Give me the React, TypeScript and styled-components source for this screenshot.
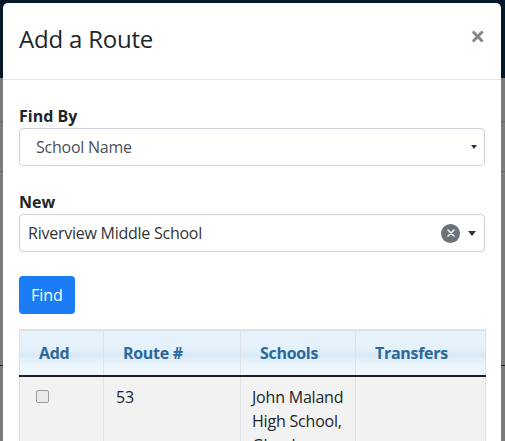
import React from 'react';
import styled, { createGlobalStyle } from 'styled-components';

const GlobalStyle = createGlobalStyle`
    * {
        box-sizing: border-box;
    }

    body {
        margin: 0;
        font-family: "Open Sans", "Noto Sans", sans-serif;
        color: #212529;
    }
`

const Page = styled.div`
    position: relative;
    width: 505px;
    height: 441px;
    overflow: hidden;
    background: #7b7b7b;
`

const NavBar = styled.div`
    height: 78px;
    background: #03192a;
`

const BackdropLine = styled.div <{ top: number; color: string }>`
    height: 1px;
    margin-top: ${props => props.top}px;
    background: ${props => props.color};
`

const Modal = styled.div`
    position: absolute;
    top: 3px;
    left: 3px;
    width: 498px;
    height: 460px;
    background: #fff;
    border-radius: 5px 5px 0 0;
`

const ModalHeader = styled.div`
    display: flex;
    align-items: center;
    justify-content: space-between;
    height: 77px;
    padding: 0 16px 5px 16px;
    border-bottom: 1px solid #e5e5e5;

    h4 {
        margin: 0;
        font-size: 24px;
        font-weight: 400;
        letter-spacing: -0.2px;
        color: #212529;
    }
`

const CloseButton = styled.button`
    border: none;
    background: none;
    padding: 0;
    margin-top: -6px;
    font-family: "Open Sans", sans-serif;
    font-size: 26px;
    font-weight: 700;
    line-height: 1;
    color: #858585;
`

const ModalBody = styled.div`
    padding: 24px 16px 0 16px;
`

const Field = styled.div`
    display: flex;
    flex-direction: column;
    margin-bottom: 24px;

    label {
        font-size: 16px;
        line-height: 24px;
        font-weight: 700;
        color: #212529;
    }
`

const SelectBox = styled.div <{ padLeft: number; padRight: number; textColor: string }>`
    display: flex;
    align-items: center;
    height: 38px;
    padding: 0 ${props => props.padRight}px 0 ${props => props.padLeft}px;
    border: 1px solid #cdd3d9;
    border-radius: 4px;
    font-size: 16px;
    letter-spacing: -0.25px;
    color: ${props => props.textColor};

    span {
        flex: 1;
    }
`

const Caret = styled.i <{ size: number }>`
    width: 0;
    height: 0;
    border-left: ${props => props.size}px solid transparent;
    border-right: ${props => props.size}px solid transparent;
    border-top: ${props => props.size + 1}px solid #333;
`

const ClearButton = styled.div`
    display: flex;
    align-items: center;
    justify-content: center;
    width: 19px;
    height: 19px;
    margin-right: 8px;
    border-radius: 50%;
    background: #6c7279;
`

const FindButton = styled.button`
    height: 38px;
    padding: 0 12px;
    margin-bottom: 15px;
    border: none;
    border-radius: 4px;
    background: #1b7cf4;
    color: #fff;
    font-family: "Open Sans", sans-serif;
    font-size: 16px;
`

const Table = styled.table`
    width: 466px;
    border-collapse: collapse;
    table-layout: fixed;
    border-top: 2px solid #dde2e6;
    font-size: 16px;
`

const HeadCell = styled.th <{ width: number }>`
    width: ${props => props.width}px;
    height: 46px;
    padding: 0 0 0 19px;
    text-align: left;
    font-weight: 700;
    letter-spacing: -0.3px;
    color: #2c6899;
    border: 1px solid #dde2e6;
    border-bottom: 2px solid #1e1e1e;
    background: linear-gradient(to bottom, #e7f3fb 0%, #e4f1fa 42%, #d7e9f6 55%, #e9f4fc 75%, #eef7fd 100%);
`

const BodyCell = styled.td <{ padLeft: number }>`
    vertical-align: top;
    height: 80px;
    padding: 8px 8px 0 ${props => props.padLeft}px;
    line-height: 24px;
    letter-spacing: -0.2px;
    color: #212529;
    background: #f2f2f2;
    border: 1px solid #dde2e6;
    border-top: none;
`

const CheckBox = styled.span`
    display: block;
    width: 13px;
    height: 13px;
    margin-top: 5px;
    border: 1px solid #9a9a9a;
    border-radius: 2px;
    background: #e9e9e9;
`

const columns = [
    { title: 'Add', width: 84 },
    { title: 'Route #', width: 137 },
    { title: 'Schools', width: 115 },
    { title: 'Transfers', width: 130 },
]

export default function App() {
    return (
        <>
            <GlobalStyle />
            <Page>
                <NavBar />
                <BackdropLine top={43} color="#56708a" />
                <BackdropLine top={49} color="#56708a" />
                <BackdropLine top={193} color="#1e1e1e" />
                <Modal>
                    <ModalHeader>
                        <h4>Add a Route</h4>
                        <CloseButton>×</CloseButton>
                    </ModalHeader>
                    <ModalBody>
                        <Field>
                            <label>Find By</label>
                            <SelectBox padLeft={16} padRight={7} textColor="#495057">
                                <span>School Name</span>
                                <Caret size={3} />
                            </SelectBox>
                        </Field>
                        <Field>
                            <label>New</label>
                            <SelectBox padLeft={8} padRight={8} textColor="#333">
                                <span>Riverview Middle School</span>
                                <ClearButton>
                                    <svg width="8" height="8" viewBox="0 0 8 8">
                                        <path d="M1 1 L7 7 M7 1 L1 7" stroke="#fff" strokeWidth="1.5" strokeLinecap="round" />
                                    </svg>
                                </ClearButton>
                                <Caret size={4} />
                            </SelectBox>
                        </Field>
                        <FindButton>Find</FindButton>
                        <Table>
                            <thead>
                                <tr>
                                    {columns.map(col => (
                                        <HeadCell key={col.title} width={col.width}>{col.title}</HeadCell>
                                    ))}
                                </tr>
                            </thead>
                            <tbody>
                                <tr>
                                    <BodyCell padLeft={16}><CheckBox /></BodyCell>
                                    <BodyCell padLeft={12}>53</BodyCell>
                                    <BodyCell padLeft={11}>John Maland High School, Glendon Middle School</BodyCell>
                                    <BodyCell padLeft={11}></BodyCell>
                                </tr>
                            </tbody>
                        </Table>
                    </ModalBody>
                </Modal>
            </Page>
        </>
    );
}
